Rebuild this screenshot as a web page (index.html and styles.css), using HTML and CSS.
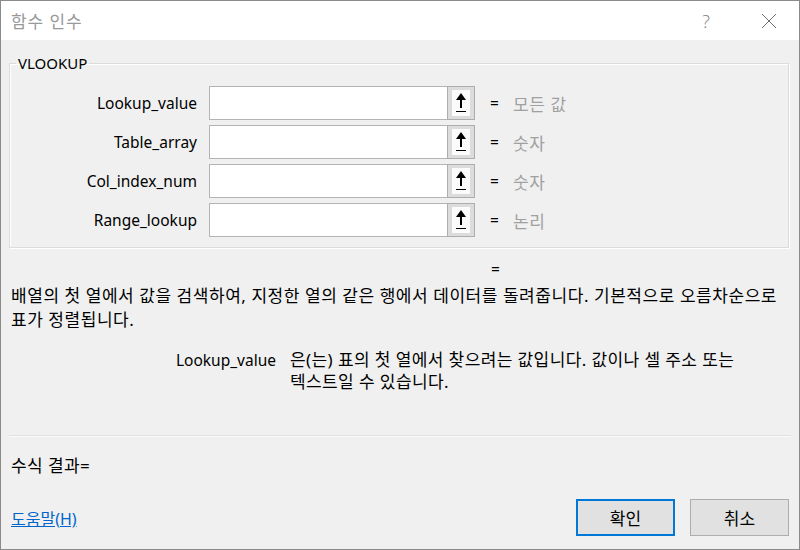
FILE: index.html
```html
<!DOCTYPE html>
<html lang="ko">

<head>
    <meta charset="UTF-8">
    <meta name="viewport" content="width=device-width, initial-scale=1.0">
    <title>함수 인수</title>
    <link rel="stylesheet" href="styles.css">
</head>

<body>
    <div class="dialog">
        <header class="titlebar">
            <span class="title">함수 인수</span>
            <span class="help">?</span>
            <svg class="close" width="16" height="16" viewBox="0 0 16 16">
                <path d="M1 1 L15 15 M15 1 L1 15" stroke="#6e6e6e" stroke-width="1" fill="none" />
            </svg>
        </header>
        <main class="content">
            <fieldset class="args">
                <legend>VLOOKUP</legend>
                <div class="arg-row">
                    <label for="a1">Lookup_value</label>
                    <input id="a1" type="text">
                    <button class="collapse" title="대화 상자 축소"><span class="pick"></span></button>
                    <span class="eq">=</span>
                    <span class="hint">모든 값</span>
                </div>
                <div class="arg-row">
                    <label for="a2">Table_array</label>
                    <input id="a2" type="text">
                    <button class="collapse" title="대화 상자 축소"><span class="pick"></span></button>
                    <span class="eq">=</span>
                    <span class="hint">숫자</span>
                </div>
                <div class="arg-row">
                    <label for="a3">Col_index_num</label>
                    <input id="a3" type="text">
                    <button class="collapse" title="대화 상자 축소"><span class="pick"></span></button>
                    <span class="eq">=</span>
                    <span class="hint">숫자</span>
                </div>
                <div class="arg-row">
                    <label for="a4">Range_lookup</label>
                    <input id="a4" type="text">
                    <button class="collapse" title="대화 상자 축소"><span class="pick"></span></button>
                    <span class="eq">=</span>
                    <span class="hint">논리</span>
                </div>
            </fieldset>

            <div class="total-eq">=</div>
            <p class="summary">배열의 첫 열에서 값을 검색하여, 지정한 열의 같은 행에서 데이터를 돌려줍니다. 기본적으로 오름차순으로 표가 정렬됩니다.</p>

            <div class="arg-help">
                <span class="arg-name">Lookup_value</span>
                <p>은(는) 표의 첫 열에서 찾으려는 값입니다. 값이나 셀 주소 또는 텍스트일 수 있습니다.</p>
            </div>

            <hr class="sep">
            <div class="result">수식 결과=</div>

            <footer class="footer">
                <a href="#" class="help-link">도움말(H)</a>
                <div class="buttons">
                    <button class="btn primary">확인</button>
                    <button class="btn">취소</button>
                </div>
            </footer>
        </main>
    </div>
</body>

</html>
```

FILE: styles.css
```css
body {
    margin: 0;
    background-color: #ffffff;
    font-family: "Noto Sans", "Noto Sans CJK KR", sans-serif;
    font-size: 15.5px;
    color: #000;
}

.dialog {
    width: 800px;
    height: 550px;
    box-sizing: border-box;
    border: 1px solid #8a8a8a;
    display: flex;
    flex-direction: column;
    overflow: hidden;
}

.titlebar {
    height: 39px;
    background-color: #fff;
    display: flex;
    align-items: center;
    padding-left: 10px;
    flex-shrink: 0;
}

.title {
    font-family: "Noto Sans CJK KR", sans-serif;
    font-size: 17px;
    letter-spacing: 0.8px;
    color: #999;
    flex: 1;
}

.help {
    font-size: 18px;
    color: #8a8a8a;
    margin-right: 51px;
    font-weight: 300;
}

.close {
    margin-right: 22px;
}

.content {
    flex: 1;
    background-color: #f0f0f0;
    padding: 14px 8px 0 8px;
    display: flex;
    flex-direction: column;
    word-break: keep-all;
}

.args {
    margin: 0;
    padding: 14px 0 10px 0;
    border: 1px solid #dcdcdc;
    box-shadow: inset 1px 1px 0 #fff, 1px 1px 0 #fff;
    width: 780px;
    box-sizing: border-box;
}

.args legend {
    margin-left: 6px;
    padding: 0 2px;
    line-height: 18px;
    font-size: 15px;
}

.arg-row {
    display: grid;
    grid-template-columns: 199px 238px 28px 38px 1fr;
    height: 34px;
    align-items: center;
    margin-bottom: 5px;
}

.arg-row:last-child {
    margin-bottom: 0;
}

.arg-row label {
    text-align: right;
    padding-right: 12px;
}

.arg-row input {
    height: 34px;
    box-sizing: border-box;
    border: 1px solid #b4b4b4;
    border-right: none;
    background: #fff;
    margin: 0;
    font: inherit;
}

.collapse {
    height: 34px;
    width: 28px;
    box-sizing: border-box;
    border: 1px solid #adadad;
    background-color: #dcdcdc;
    padding: 3px 4px;
    margin: 0;
    display: flex;
}

.pick {
    flex: 1;
    position: relative;
    background-color: #fbfbfb;
    background-image: linear-gradient(#000, #000);
    background-size: 10px 1px;
    background-position: 4px 21px;
    background-repeat: no-repeat;
}

.pick::before {
    content: "";
    position: absolute;
    left: 4px;
    top: 3px;
    border-left: 5px solid transparent;
    border-right: 5px solid transparent;
    border-bottom: 7px solid #000;
}

.pick::after {
    content: "";
    position: absolute;
    left: 8px;
    top: 9px;
    width: 2px;
    height: 9px;
    background: #000;
}

.eq {
    padding-left: 15px;
}

.hint {
    font-family: "Noto Sans CJK KR", sans-serif;
    color: #a0a0a0;
    font-size: 17px;
    letter-spacing: 0.5px;
}

.total-eq {
    margin: 11px 0 0 482px;
    line-height: 20px;
}

.summary {
    margin: 5px 0 0 2px;
    font-size: 17px;
    letter-spacing: 0.55px;
    line-height: 24px;
}

.arg-help {
    display: flex;
    margin-top: 17px;
    line-height: 22px;
}

.arg-name {
    width: 267px;
    text-align: right;
    flex-shrink: 0;
}

.arg-help p {
    margin: 0 0 0 14px;
    width: 465px;
    font-size: 17px;
    letter-spacing: 0.4px;
}

.sep {
    margin: 42px 0 0 0;
    border: none;
    border-top: 1px solid #e0e0e0;
    border-bottom: 1px solid #fafafa;
}

.result {
    margin: 18px 0 0 2px;
    font-size: 17px;
    letter-spacing: 0.4px;
    line-height: 22px;
}

.footer {
    display: flex;
    align-items: center;
    margin-top: 22px;
}

.help-link {
    margin-left: 2px;
    color: #0066cc;
    font-size: 16px;
    flex: 1;
}

.buttons {
    display: flex;
    gap: 15px;
    margin-right: 2px;
}

.btn {
    width: 99px;
    height: 37px;
    box-sizing: border-box;
    border: 1px solid #adadad;
    background-color: #e1e1e1;
    font-family: "Noto Sans CJK KR", sans-serif;
    font-size: 17px;
    color: #000;
}

.btn.primary {
    border: 2px solid #0078d7;
}
```
